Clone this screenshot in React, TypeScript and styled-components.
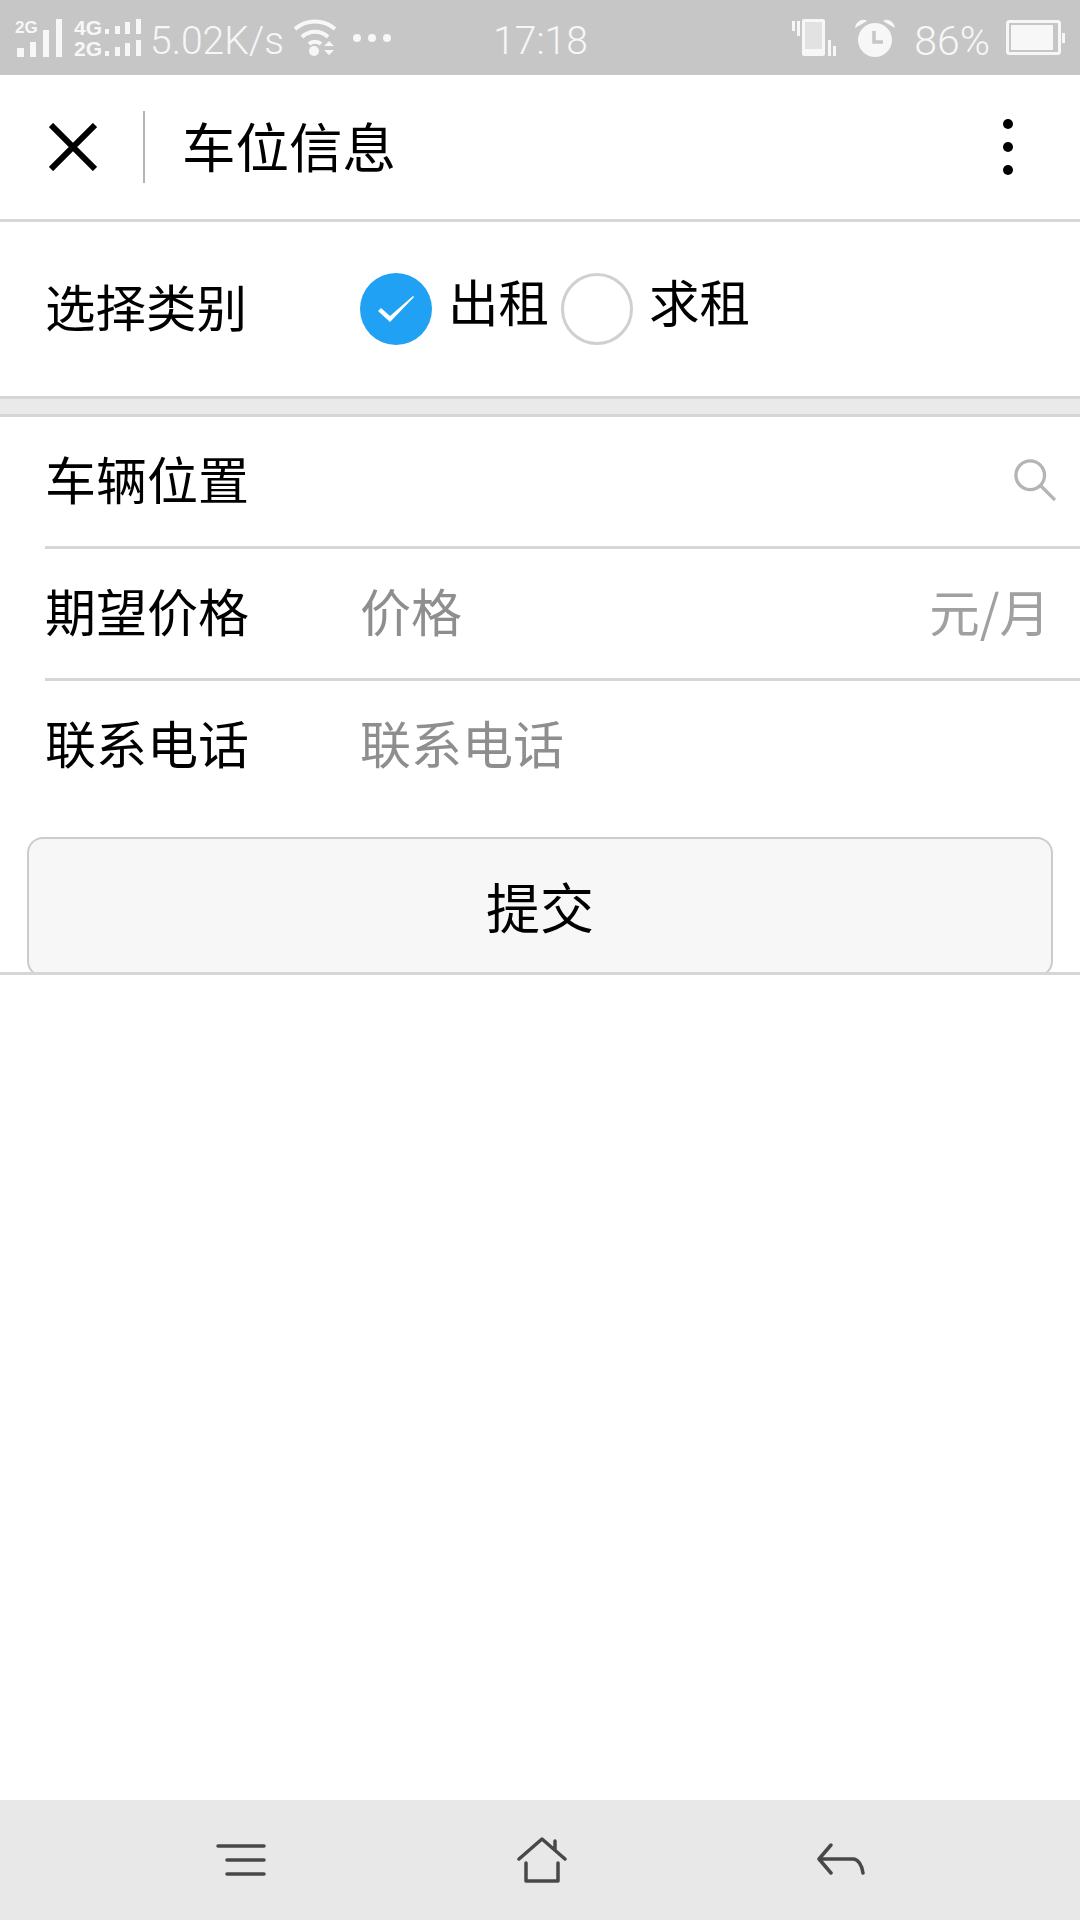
import React from 'react';
import styled, { createGlobalStyle } from 'styled-components';

/* Style Section */

const GlobalStyle = createGlobalStyle`
  html, body {
    margin: 0;
    padding: 0;
    background: #ffffff;
    font-family: "Noto Sans CJK SC", "Liberation Sans", sans-serif;
  }
  * {
    box-sizing: border-box;
  }
`;

const Page = styled.div`
  width: 1080px;
  height: 1920px;
  display: flex;
  flex-direction: column;
  overflow: hidden;
  background: #ffffff;
`;

const StatusBar = styled.div`
  height: 75px;
  flex: none;
  background: #c6c6c6;
  color: #f7f7f7;
  display: grid;
  grid-template-columns: 1fr auto 1fr;
  align-items: center;
  padding: 0 14px 0 15px;
  font-family: Roboto, "Liberation Sans", sans-serif;
  font-weight: 300;
  font-size: 39px;
`;

const StatusGroup = styled.div<{ $right?: boolean }>`
  display: flex;
  align-items: center;
  justify-content: ${(p) => (p.$right ? 'flex-end' : 'flex-start')};
`;

const StatusText = styled.span<{ $gap?: number; $size?: number }>`
  line-height: 60px;
  padding-top: 6px;
  margin-left: ${(p) => p.$gap ?? 0}px;
  font-size: ${(p) => p.$size ?? 39}px;
`;

const StatusIcon = styled.svg<{ $gap?: number }>`
  display: block;
  flex: none;
  margin-left: ${(p) => p.$gap ?? 0}px;
`;

const Header = styled.header`
  height: 147px;
  flex: none;
  display: flex;
  align-items: center;
  padding: 0 47px 0 49px;
  border-bottom: 3px solid #d6d6d6;
`;

const HeaderDivider = styled.div`
  width: 2px;
  height: 72px;
  background: #b4b4b4;
  margin-left: 46px;
`;

const Title = styled.div`
  flex: 1;
  margin: -5px 0 0 37px;
  font-size: 53.5px;
  line-height: 72px;
  color: #000000;
`;

const MoreDots = styled.div`
  display: flex;
  flex-direction: column;
  gap: 13px;
  margin-right: 20px;
`;

const Dot = styled.span`
  width: 10px;
  height: 10px;
  border-radius: 50%;
  background: #000000;
`;

const CategorySection = styled.section`
  height: 177px;
  flex: none;
  display: flex;
  align-items: center;
  padding-left: 45px;
  border-bottom: 3px solid #d6d6d6;
`;

const Label = styled.div<{ $size?: number; $lift?: number }>`
  width: 315px;
  flex: none;
  margin-bottom: ${(p) => p.$lift ?? 8}px;
  font-size: ${(p) => p.$size ?? 51}px;
  line-height: 60px;
  color: #000000;
`;

const RadioGroup = styled.div`
  display: flex;
  align-items: center;
  gap: 12px;
`;

const RadioOption = styled.div`
  display: flex;
  align-items: center;
  gap: 16px;
`;

const RadioCircle = styled.div<{ $checked?: boolean }>`
  width: 72px;
  height: 72px;
  border-radius: 50%;
  display: flex;
  align-items: center;
  justify-content: center;
  background: ${(p) => (p.$checked ? '#20a1f3' : '#ffffff')};
  border: ${(p) => (p.$checked ? 'none' : '3px solid #d0d0d0')};
`;

const RadioText = styled.span`
  font-size: 50.5px;
  line-height: 60px;
  color: #000000;
  margin-top: -18px;
`;

const Spacer = styled.div`
  height: 15px;
  flex: none;
  background: #eaeaea;
  border-bottom: 3px solid #d6d6d6;
  box-sizing: content-box;
`;

const FormList = styled.section`
  flex: none;
  padding-left: 45px;
`;

const FormRow = styled.div<{ $last?: boolean }>`
  height: ${(p) => (p.$last ? 130 : 132)}px;
  display: flex;
  align-items: center;
  border-bottom: ${(p) => (p.$last ? 'none' : '3px solid #d6d6d6')};
`;

const RowValue = styled.div`
  flex: 1;
  margin-bottom: 8px;
  font-size: 51px;
  line-height: 60px;
  color: #8e8e8e;
`;

const RowUnit = styled.div`
  margin: 0 30px 8px 0;
  font-size: 50.5px;
  line-height: 60px;
  color: #a0a0a0;
`;

const SearchIcon = styled.svg`
  display: block;
  margin: 0 24px 4px 0;
`;

const SubmitWrap = styled.div`
  flex: none;
  height: 164px;
  padding: 26px 27px 0;
  overflow: hidden;
  border-bottom: 3px solid #d6d6d6;
`;

const SubmitButton = styled.button`
  display: block;
  width: 100%;
  height: 140px;
  padding: 0 0 2px;
  border: 2px solid #cccccc;
  border-radius: 16px;
  background: #f7f7f7;
  color: #000000;
  font-family: "Noto Sans CJK SC", sans-serif;
  font-size: 54px;
  line-height: 60px;
`;

const Content = styled.main`
  flex: 1;
`;

const NavBar = styled.nav`
  height: 120px;
  flex: none;
  background: #e8e8e8;
  display: flex;
  align-items: center;
  justify-content: space-between;
  padding: 0 215px 0 216px;
`;

const rows = [
  { label: '期望价格', value: '价格', unit: '元/月' },
  { label: '联系电话', value: '联系电话' },
];

const App: React.FC = () => {
  return (
    <Page>
      <GlobalStyle />
      <StatusBar>
        <StatusGroup>
          <StatusIcon width="48" height="44" viewBox="0 0 48 44" fill="#f7f7f7">
            <text x="0" y="17" fontSize="17" fontWeight="700" fontFamily="Liberation Sans">2G</text>
            <rect x="2" y="32" width="7" height="9" />
            <rect x="15" y="26" width="6" height="15" />
            <rect x="28" y="14" width="6" height="27" />
            <rect x="41" y="3" width="6" height="38" />
          </StatusIcon>
          <StatusIcon $gap={11} width="68" height="44" viewBox="0 0 68 44" fill="#f7f7f7">
            <text x="0" y="19" fontSize="21" fontWeight="700" fontFamily="Liberation Sans">4G</text>
            <text x="0" y="40" fontSize="21" fontWeight="700" fontFamily="Liberation Sans">2G</text>
            <rect x="31" y="13" width="4" height="5" />
            <rect x="41" y="10" width="5" height="8" />
            <rect x="51" y="6" width="5" height="12" />
            <rect x="62" y="3" width="5" height="15" />
            <rect x="31" y="35" width="4" height="5" />
            <rect x="41" y="31" width="5" height="9" />
            <rect x="51" y="27" width="5" height="13" />
            <rect x="62" y="24" width="5" height="16" />
          </StatusIcon>
          <StatusText $gap={8}>5.02K/s</StatusText>
          <StatusIcon $gap={9} width="46" height="38" viewBox="0 0 46 38" fill="none" stroke="#f7f7f7" strokeWidth="4">
            <path d="M2 10C13 0 31 0 42 10" />
            <path d="M9 18C16 11 28 11 35 18" />
            <path d="M16 25C19 22 25 22 28 25" />
            <circle cx="21" cy="32" r="5" fill="#f7f7f7" stroke="none" />
            <path d="M31 27l5-5 5 5zM31 31l5 5 5-5z" fill="#f7f7f7" stroke="none" />
          </StatusIcon>
          <StatusIcon $gap={14} width="38" height="10" viewBox="0 0 38 10" fill="#f7f7f7">
            <circle cx="4" cy="5" r="4" />
            <circle cx="19" cy="5" r="4" />
            <circle cx="34" cy="5" r="4" />
          </StatusIcon>
        </StatusGroup>
        <StatusText>17:18</StatusText>
        <StatusGroup $right>
          <StatusIcon width="46" height="38" viewBox="0 0 46 38">
            <rect x="0" y="2" width="3" height="10" fill="#f7f7f7" />
            <rect x="5" y="2" width="3" height="15" fill="#f7f7f7" />
            <rect x="10" y="0" width="23" height="37" rx="2" fill="#f7f7f7" />
            <rect x="13" y="3" width="17" height="27" fill="#e2e2e2" />
            <rect x="36" y="21" width="3" height="16" fill="#f7f7f7" />
            <rect x="41" y="27" width="3" height="10" fill="#f7f7f7" />
          </StatusIcon>
          <StatusIcon $gap={16} width="42" height="40" viewBox="0 0 42 40">
            <circle cx="21" cy="22" r="17" fill="#f7f7f7" />
            <path d="M1 10C2 3 9 0 13 3ZM41 10C40 3 33 0 29 3Z" fill="#f7f7f7" />
            <path d="M20 13V24H29" fill="none" stroke="#c6c6c6" strokeWidth="3.5" />
          </StatusIcon>
          <StatusText $gap={18} $size={41}>86%</StatusText>
          <StatusIcon $gap={16} width="60" height="36" viewBox="0 0 60 36">
            <rect x="1.5" y="1.5" width="52" height="32" rx="2" fill="none" stroke="#f7f7f7" strokeWidth="3" />
            <rect x="5" y="5" width="42" height="25" fill="#f7f7f7" />
            <rect x="56" y="13" width="3" height="10" fill="#f7f7f7" />
          </StatusIcon>
        </StatusGroup>
      </StatusBar>

      <Header>
        <svg width="48" height="48" viewBox="0 0 48 48" fill="none" stroke="#000000" strokeWidth="6">
          <path d="M2 2L46 46M46 2L2 46" />
        </svg>
        <HeaderDivider />
        <Title>车位信息</Title>
        <MoreDots>
          <Dot />
          <Dot />
          <Dot />
        </MoreDots>
      </Header>

      <CategorySection>
        <Label $size={50.5} $lift={8}>选择类别</Label>
        <RadioGroup>
          <RadioOption>
            <RadioCircle $checked>
              <svg width="36" height="26" viewBox="0 0 36 26" fill="#ffffff">
                <path d="M0 15L3 12L12 20L35 0L36 1L12 26Z" />
              </svg>
            </RadioCircle>
            <RadioText>出租</RadioText>
          </RadioOption>
          <RadioOption>
            <RadioCircle />
            <RadioText>求租</RadioText>
          </RadioOption>
        </RadioGroup>
      </CategorySection>

      <Spacer />

      <FormList>
        <FormRow>
          <Label>车辆位置</Label>
          <RowValue />
          <SearchIcon width="42" height="42" viewBox="0 0 44 44" fill="none" stroke="#b4b4b4" strokeWidth="3.5">
            <circle cx="17" cy="17" r="15" />
            <path d="M28 28L43 43" />
          </SearchIcon>
        </FormRow>
        {rows.map((row, index) => (
          <FormRow key={row.label} $last={index === rows.length - 1}>
            <Label>{row.label}</Label>
            <RowValue>{row.value}</RowValue>
            {row.unit && <RowUnit>{row.unit}</RowUnit>}
          </FormRow>
        ))}
      </FormList>

      <SubmitWrap>
        <SubmitButton>提交</SubmitButton>
      </SubmitWrap>

      <Content />

      <NavBar>
        <svg width="50" height="34" viewBox="0 0 50 34" fill="none" stroke="#484848" strokeWidth="3.5" strokeLinecap="round">
          <path d="M2 3H48M11 17H48M11 31H48" />
        </svg>
        <svg width="50" height="46" viewBox="0 0 50 46" fill="none" stroke="#484848" strokeWidth="3.5" strokeLinecap="round" strokeLinejoin="round">
          <path d="M2 22L25 2L48 22M38 4V13M9 26V44H41V26" />
        </svg>
        <svg width="48" height="34" viewBox="0 0 48 34" fill="none" stroke="#484848" strokeWidth="3.5" strokeLinecap="round" strokeLinejoin="round">
          <path d="M14 2L2 16L14 30M2 16H36C41 16 45 22 46 30" />
        </svg>
      </NavBar>
    </Page>
  );
};

export default App;
